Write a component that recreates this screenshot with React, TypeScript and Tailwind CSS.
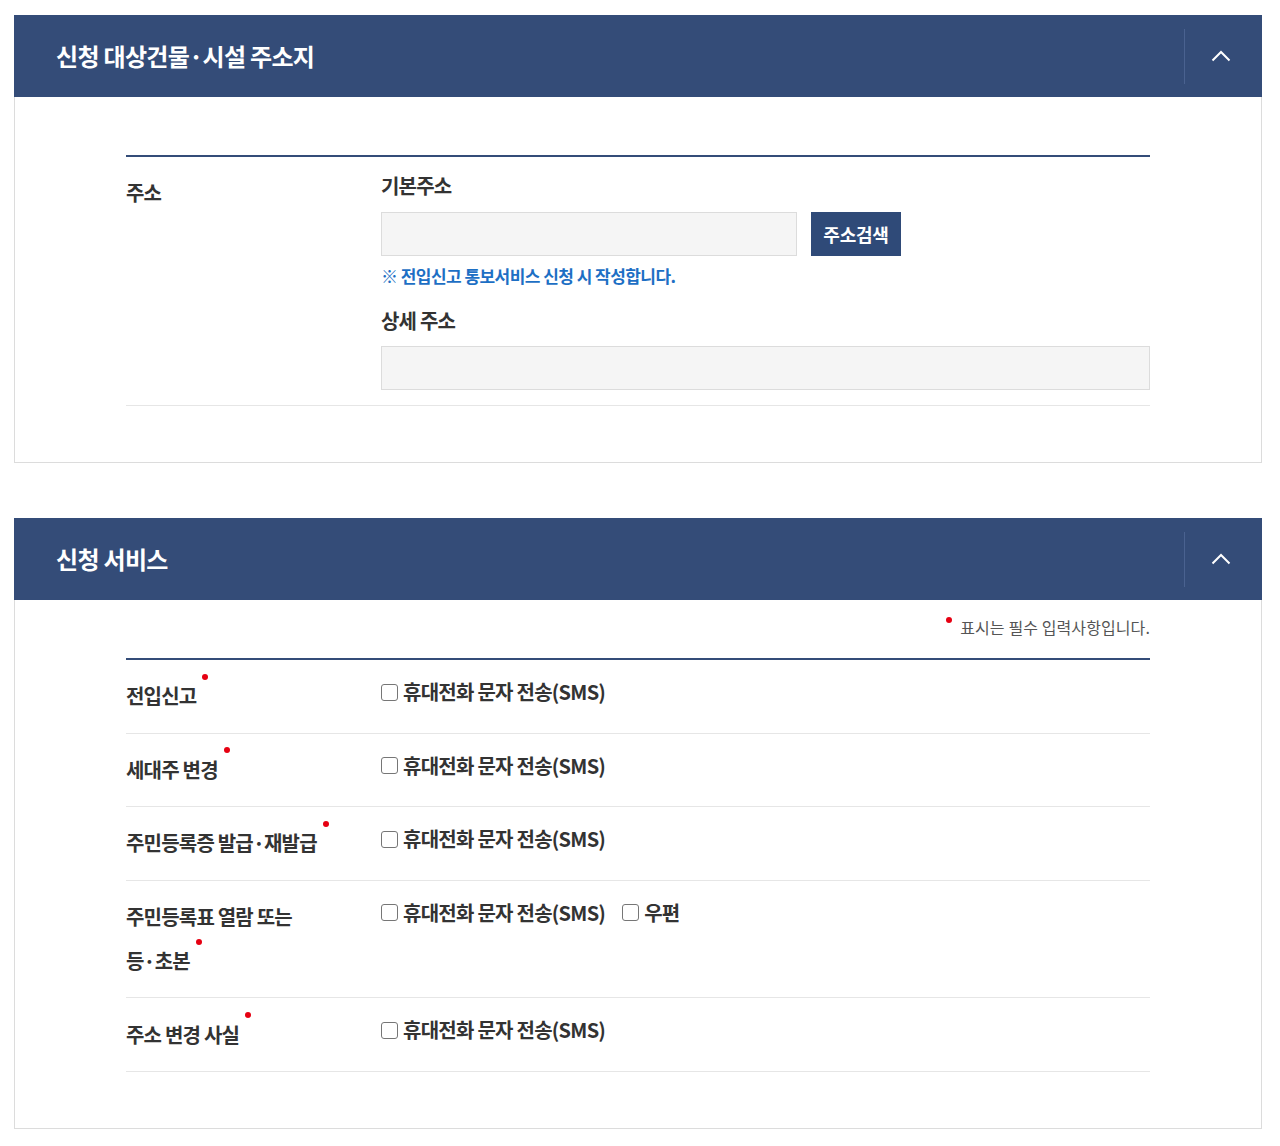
import React from "react";

const FONT = "font-['Noto_Sans_CJK_KR','Noto_Sans',sans-serif]";

const ChevronUp = () => (
  <svg width="20" height="12" viewBox="0 0 20 12" fill="none">
    <path d="M1.5 10.5 L10 2 L18.5 10.5" stroke="#ffffff" strokeWidth="2" />
  </svg>
);

const PanelHeader = ({ title }: { title: string }) => (
  <div className="flex h-[82px] items-center bg-[#344c78]">
    <h2 className="flex-1 pl-[42px] text-[24px] font-bold tracking-[-0.7px] text-white">
      {title}
    </h2>
    <div className="h-[55px] w-px bg-[#4a6290]" />
    <button className="flex h-full w-[77px] items-center justify-center pr-[5px]">
      <ChevronUp />
    </button>
  </div>
);

const Dot = () => (
  <span className="relative -top-[22px] ml-[6px] inline-block h-[6px] w-[6px] rounded-full bg-[#e60012] align-middle" />
);

const Check = ({ label }: { label: string }) => (
  <label className="flex items-center gap-[5px]">
    <span className="inline-block h-[17px] w-[17px] rounded-[3px] border border-[#767676] bg-white" />
    <span>{label}</span>
  </label>
);

const services: { label: string[]; post?: boolean }[] = [
  { label: ["전입신고"] },
  { label: ["세대주 변경"] },
  { label: ["주민등록증 발급·재발급"] },
  { label: ["주민등록표 열람 또는", "등·초본"], post: true },
  { label: ["주소 변경 사실"] },
];

export default function App() {
  return (
    <div className={`${FONT} min-h-[1146px] bg-white pt-[15px] text-[#333]`}>
      <div className="ml-[14px] flex w-[1248px] flex-col gap-[55px]">
        {/* 주소지 */}
        <section>
          <PanelHeader title="신청 대상건물·시설 주소지" />
          <div className="border-x border-b border-[#dcdcdc] px-[111px] pt-[58px] pb-[56px]">
            <div className="flex border-t-2 border-b border-t-[#344c78] border-b-[#e6e6e6]">
              <div className="w-[255px] pt-[14px] text-[20px] font-bold leading-[44px] tracking-[-0.8px]">
                주소
              </div>
              <div className="flex flex-1 flex-col pt-[14px] pb-[15px]">
                <div className="text-[20px] font-bold leading-[30px] tracking-[-0.8px]">
                  기본주소
                </div>
                <div className="mt-[11px] flex gap-[14px]">
                  <input className="h-[44px] w-[416px] border border-[#dcdcdc] bg-[#f5f5f5]" />
                  <button className="h-[44px] w-[90px] bg-[#2f4a78] text-[18px] font-bold tracking-[-0.2px] text-white">
                    주소검색
                  </button>
                </div>
                <p className="mt-[8px] text-[17px] font-bold leading-[24px] tracking-[-0.55px] text-[#1d6fc4]">
                  ※ 전입신고 통보서비스 신청 시 작성합니다.
                </p>
                <div className="mt-[18px] text-[20px] font-bold leading-[30px] tracking-[-0.8px]">
                  상세 주소
                </div>
                <input className="mt-[10px] h-[44px] w-full border border-[#dcdcdc] bg-[#f5f5f5]" />
              </div>
            </div>
          </div>
        </section>

        {/* 신청 서비스 */}
        <section>
          <PanelHeader title="신청 서비스" />
          <div className="border-x border-b border-[#dcdcdc] px-[111px] pt-[16px] pb-[56px]">
            <p className="mb-[20px] flex justify-end text-[16px] leading-[22px] tracking-[0.1px] text-[#555]">
              <span className="mr-[8px] mt-[1px] inline-block h-[6px] w-[6px] rounded-full bg-[#e60012]" />
              표시는 필수 입력사항입니다.
            </p>
            <div className="border-t-2 border-[#344c78]">
              {services.map((s, i) => (
                <div key={i} className="flex border-b border-[#e6e6e6]">
                  <div className="w-[255px] py-[14.3px] text-[20px] font-bold leading-[44px] tracking-[-0.8px]">
                    {s.label.map((l, j) => (
                      <div key={j}>
                        {l}
                        {j === s.label.length - 1 && <Dot />}
                      </div>
                    ))}
                  </div>
                  <div className="flex flex-1 items-start gap-[17px] pt-[14px] text-[20px] font-bold leading-[36px] tracking-[-0.75px]">
                    <Check label="휴대전화 문자 전송(SMS)" />
                    {s.post && <Check label="우편" />}
                  </div>
                </div>
              ))}
            </div>
          </div>
        </section>
      </div>
    </div>
  );
}
